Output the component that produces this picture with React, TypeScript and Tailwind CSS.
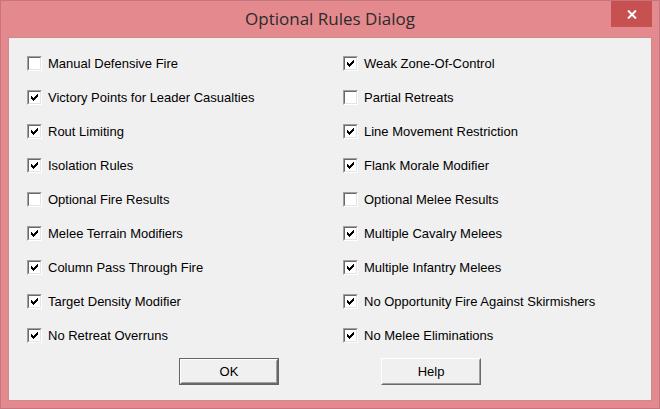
const LEFT = [
  { label: "Manual Defensive Fire", checked: false },
  { label: "Victory Points for Leader Casualties", checked: true },
  { label: "Rout Limiting", checked: true },
  { label: "Isolation Rules", checked: true },
  { label: "Optional Fire Results", checked: false },
  { label: "Melee Terrain Modifiers", checked: true },
  { label: "Column Pass Through Fire", checked: true },
  { label: "Target Density Modifier", checked: true },
  { label: "No Retreat Overruns", checked: true },
];

const RIGHT = [
  { label: "Weak Zone-Of-Control", checked: true },
  { label: "Partial Retreats", checked: false },
  { label: "Line Movement Restriction", checked: true },
  { label: "Flank Morale Modifier", checked: true },
  { label: "Optional Melee Results", checked: false },
  { label: "Multiple Cavalry Melees", checked: true },
  { label: "Multiple Infantry Melees", checked: true },
  { label: "No Opportunity Fire Against Skirmishers", checked: true },
  { label: "No Melee Eliminations", checked: true },
];

// classic 7x7 check bitmap
const CHECK = [
  "......X",
  ".....XX",
  "X...XXX",
  "XX.XXX.",
  "XXXXX..",
  ".XXX...",
  "..X....",
];

function CheckMark() {
  const rects: JSX.Element[] = [];
  CHECK.forEach((row, y) =>
    row.split("").forEach((c, x) => {
      if (c === "X") rects.push(<rect key={`${x}-${y}`} x={x} y={y} width={1} height={1} fill="#000" />);
    })
  );
  return (
    <svg width="7" height="7" viewBox="0 0 7 7" shapeRendering="crispEdges">
      {rects}
    </svg>
  );
}

function Check({ label, checked }: { label: string; checked: boolean }) {
  return (
    <div className="flex h-[34px] items-center">
      <div className="h-[15px] w-[15px] border border-t-[#a0a0a0] border-l-[#a0a0a0] border-r-white border-b-white">
        <div className="flex h-full w-full items-center justify-center border border-t-[#696969] border-l-[#696969] border-r-[#e3e3e3] border-b-[#e3e3e3] bg-white">
          {checked && <CheckMark />}
        </div>
      </div>
      <span className="ml-[6px] text-[13px] leading-none text-black">{label}</span>
    </div>
  );
}

function Btn({ children, primary }: { children: string; primary?: boolean }) {
  const inner = (
    <div className="h-full w-full border border-t-white border-l-white border-r-[#696969] border-b-[#696969]">
      <div className="flex h-full w-full items-center justify-center border border-t-[#f0f0f0] border-l-[#f0f0f0] border-r-[#a0a0a0] border-b-[#a0a0a0] bg-[#f0f0f0] text-[13px] text-black">
        {children}
      </div>
    </div>
  );
  return (
    <div className={`h-[27px] w-[100px] ${primary ? "border border-[#646464]" : ""}`}>{inner}</div>
  );
}

export default function App() {
  return (
    <div
      className="flex h-[409px] w-[660px] flex-col border border-[#c5767c] bg-[#e4898d]"
      style={{ fontFamily: '"Liberation Sans", Arial, sans-serif' }}
    >
      <div className="relative flex h-[36px] shrink-0 items-center justify-center">
        <span
          className="text-[17px] text-[#2b2b2b]"
          style={{ fontFamily: '"Open Sans", "Noto Sans", sans-serif' }}
        >
          Optional Rules Dialog
        </span>
        <div className="absolute right-[7px] top-0 flex h-[26px] w-[41px] items-center justify-center bg-[#c75050]">
          <svg width="10" height="9" viewBox="0 0 10 9">
            <path d="M1 0.5 L9 8.5 M9 0.5 L1 8.5" stroke="#fff" strokeWidth="2" />
          </svg>
        </div>
      </div>
      <div className="mx-[7px] mb-[7px] flex-1 border border-[#cf8a8e] bg-[#f0f0f0] pl-[18px] pt-[8px]">
        <div className="grid grid-cols-[316px_1fr]">
          <div className="flex flex-col">
            {LEFT.map((r) => (
              <Check key={r.label} {...r} />
            ))}
          </div>
          <div className="flex flex-col">
            {RIGHT.map((r) => (
              <Check key={r.label} {...r} />
            ))}
          </div>
        </div>
        <div className="mt-[6px] flex pl-[152px]">
          <Btn primary>OK</Btn>
          <div className="ml-[102px]">
            <Btn>Help</Btn>
          </div>
        </div>
      </div>
    </div>
  );
}
